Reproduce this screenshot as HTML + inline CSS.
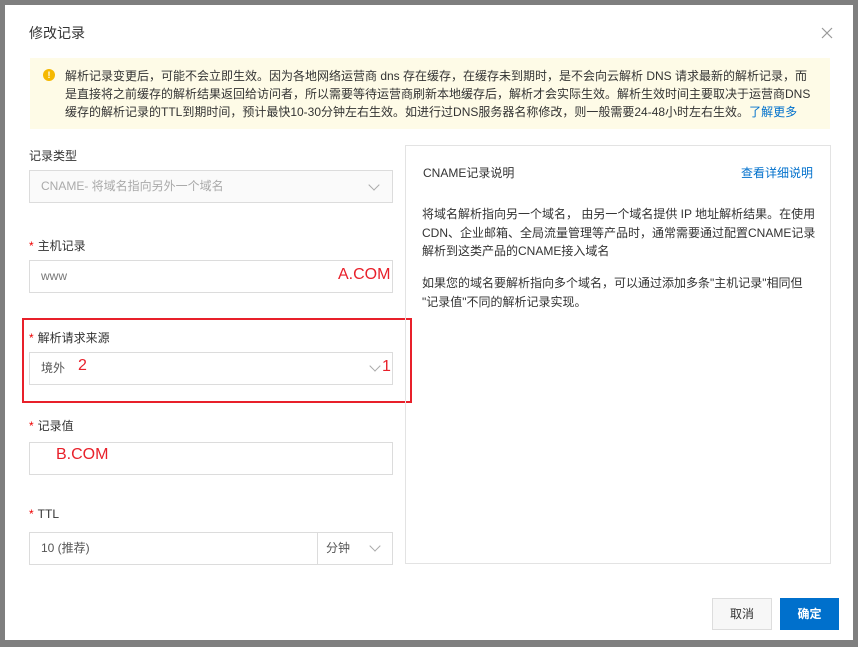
<!DOCTYPE html><html><head><meta charset="utf-8"><style>
*{box-sizing:border-box;margin:0;padding:0}
body{width:858px;height:647px;background:#7f7f7f;font-family:"Liberation Sans","Noto Sans CJK SC",sans-serif;font-size:12px;color:#333;position:relative;overflow:hidden}
.a{position:absolute}
.dlg{left:5px;top:5px;width:848px;height:635px;background:#fff}
.inp{position:absolute;border:1px solid #dcdcdc;background:#fff;height:33px;left:29px;width:364px;color:#777;padding-left:11px;line-height:31px}
.lbl{position:absolute;left:29px;font-size:12px;color:#333}
.st{color:#e00;margin-right:4px}
.red{color:#e8202a;font-size:16px}
.chev{position:absolute;width:8px;height:8px;border-right:1px solid #aaa;border-bottom:1px solid #aaa;transform:rotate(45deg)}
</style></head><body>
<div class="a dlg"></div>
<div class="a" style="left:29px;top:23px;font-size:14px;color:#333">修改记录</div>
<svg class="a" style="left:821px;top:27px" width="12" height="12"><path d="M1 1L11 11M11 1L1 11" stroke="#999" stroke-width="1.2"/></svg>
<div class="a" style="left:30px;top:58px;width:800px;height:71px;background:#fefbe7"></div>
<div class="a" style="left:43px;top:69px;width:12px;height:12px;border-radius:50%;background:#f5b800;color:#fff;font-size:9px;text-align:center;line-height:12px;font-weight:bold">!</div>
<div class="a" style="left:65px;top:67px;white-space:nowrap;line-height:18px;font-size:12px;color:#333">解析记录变更后，可能不会立即生效。因为各地网络运营商 dns 存在缓存，在缓存未到期时，是不会向云解析 DNS 请求最新的解析记录，而<br>是直接将之前缓存的解析结果返回给访问者，所以需要等待运营商刷新本地缓存后，解析才会实际生效。解析生效时间主要取决于运营商DNS<br>缓存的解析记录的TTL到期时间，预计最快10-30分钟左右生效。如进行过DNS服务器名称修改，则一般需要24-48小时左右生效。<span style="color:#0070cc">了解更多</span></div>

<div class="lbl" style="top:147px">记录类型</div>
<div class="inp" style="top:170px;background:#fafafa;color:#aaa">CNAME- 将域名指向另外一个域名</div>
<div class="chev" style="left:370px;top:181px"></div>

<div class="lbl" style="top:237px"><span class="st">*</span>主机记录</div>
<div class="inp" style="top:260px">www</div>
<div class="a red" style="left:338px;top:266px">A.COM</div>

<div class="a" style="left:22px;top:318px;width:390px;height:85px;border:2px solid #e8202a"></div>
<div class="lbl" style="top:329px"><span class="st">*</span>解析请求来源</div>
<div class="inp" style="top:352px;color:#555">境外</div>
<div class="a red" style="left:78px;top:357px">2</div>
<div class="chev" style="left:371px;top:362px"></div>
<div class="a red" style="left:382px;top:358px">1</div>

<div class="lbl" style="top:417px"><span class="st">*</span>记录值</div>
<div class="inp" style="top:442px"></div>
<div class="a red" style="left:56px;top:446px">B.COM</div>

<div class="lbl" style="top:507px"><span class="st">*</span>TTL</div>
<div class="inp" style="top:532px;width:289px;color:#555">10 (推荐)</div>
<div class="inp" style="top:532px;left:317px;width:76px;color:#555;padding-left:8px">分钟</div>
<div class="chev" style="left:371px;top:542px"></div>

<div class="a" style="left:405px;top:145px;width:426px;height:419px;border:1px solid #e3e3e3"></div>
<div class="a" style="left:423px;top:164px;color:#333">CNAME记录说明</div>
<div class="a" style="left:741px;top:164px;color:#0070cc">查看详细说明</div>
<div class="a" style="left:422px;top:205px;width:396px;line-height:18.5px;color:#333">将域名解析指向另一个域名， 由另一个域名提供 IP 地址解析结果。在使用CDN、企业邮箱、全局流量管理等产品时，通常需要通过配置CNAME记录解析到这类产品的CNAME接入域名</div>
<div class="a" style="left:422px;top:274px;width:396px;line-height:18.5px;color:#333">如果您的域名要解析指向多个域名，可以通过添加多条"主机记录"相同但<br>"记录值"不同的解析记录实现。</div>

<div class="a" style="left:712px;top:598px;width:60px;height:32px;border:1px solid #ddd;background:#f7f7f7;text-align:center;line-height:30px;color:#333">取消</div>
<div class="a" style="left:780px;top:598px;width:59px;height:32px;background:#0070cc;color:#fff;text-align:center;line-height:32px;font-weight:bold">确定</div>
</body></html>
